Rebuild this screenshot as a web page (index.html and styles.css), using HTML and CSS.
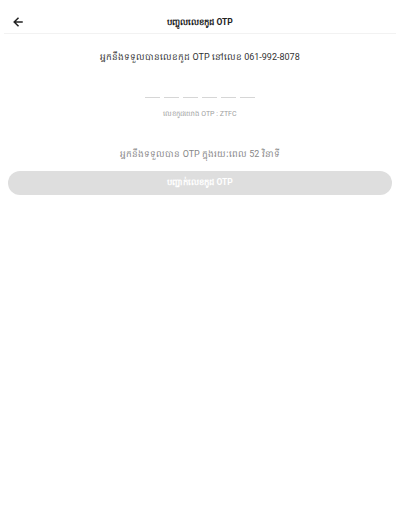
FILE: index.html
```html
<!DOCTYPE html>
<html lang="km">
<head>
<meta charset="utf-8">
<title>OTP</title>
<link rel="stylesheet" href="styles.css">
</head>
<body>
<div class="page">
  <header class="topbar">
    <span class="back">
      <svg width="10" height="10" viewBox="0 0 10 10"><path d="M9 5H1.5M5 1.2L1.2 5 5 8.8" fill="none" stroke="#222" stroke-width="1.5" stroke-linecap="square"/></svg>
    </span>
    <h1 class="title">បញ្ចូលលេខកូដ OTP</h1>
  </header>
  <main class="content">
    <p class="info">អ្នកនឹងទទួលបានលេខកូដ OTP នៅលេខ 061-992-8078</p>
    <div class="slots">
      <span class="slot"></span><span class="slot"></span><span class="slot"></span><span class="slot"></span><span class="slot"></span><span class="slot"></span>
    </div>
    <p class="ref">លេខកូដយោង OTP : ZTFC</p>
    <p class="timer">អ្នកនឹងទទួលបាន OTP ក្នុងរយៈពេល 52 វិនាទី</p>
    <button class="confirm" type="button">បញ្ជាក់លេខកូដ OTP</button>
  </main>
</div>
</body>
</html>
```
FILE: styles.css
```css
* { box-sizing: border-box; }
html, body { margin: 0; padding: 0; background: #fff; }
body { font-family: Roboto, "Noto Sans", "DejaVu Sans", sans-serif; color: #333; }
.page { width: 400px; }
.topbar {
  position: relative;
  margin: 0 4px;
  height: 34px;
  padding-top: 11px;
  border-bottom: 1px solid #f2f2f2;
  display: flex;
  justify-content: center;
}
.back {
  position: absolute;
  left: 9px;
  top: 17px;
  width: 10px;
  height: 10px;
  display: flex;
}
.title {
  margin: 0;
  font-size: 8.5px;
  font-weight: 700;
  line-height: 22px;
  color: #222;
}
.content {
  display: flex;
  flex-direction: column;
  align-items: center;
  padding: 0 8px;
}
.info {
  margin: 15px 0 0;
  font-size: 9px;
  line-height: 16px;
  color: #333;
}
.slots {
  display: flex;
  gap: 4px;
  margin-top: 32px;
}
.slot {
  width: 15px;
  height: 1px;
  background: #d6d6d6;
}
.ref {
  margin: 11px 0 0;
  font-size: 7px;
  line-height: 10px;
  color: #a0a0a0;
}
.timer {
  margin: 27px 0 0;
  font-size: 9px;
  line-height: 16px;
  color: #888;
}
.confirm {
  margin-top: 9px;
  width: 384px;
  height: 24px;
  border: none;
  border-radius: 12px;
  background: #dedede;
  color: #fff;
  font-family: inherit;
  font-size: 8.5px;
  font-weight: 700;
  padding: 0;
}
```
